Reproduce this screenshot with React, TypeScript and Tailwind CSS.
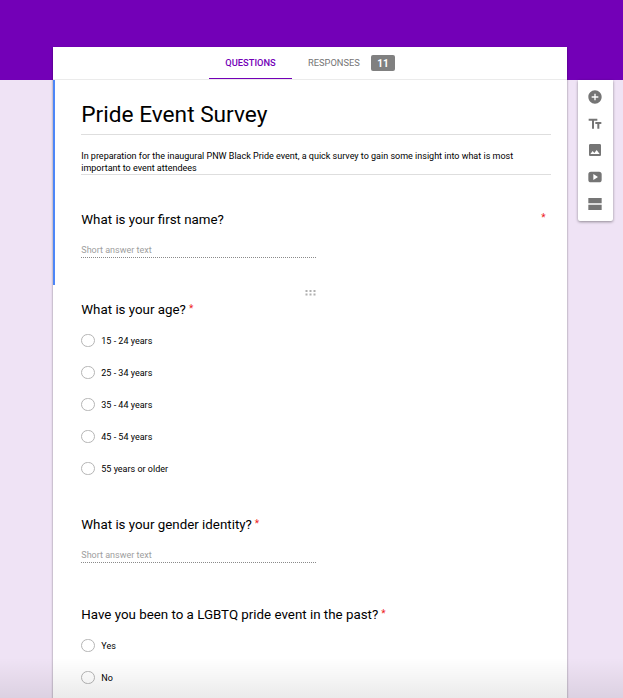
import type { ReactNode } from "react";

function Question({ title, required }: { title: string; required?: boolean }) {
  return (
    <h2 className="flex h-5 items-center whitespace-nowrap pl-[0.3px] pt-[2px] text-[13.33px] leading-5 text-black">
      {title}
      {required && <Star className="ml-[3px]" />}
    </h2>
  );
}

function Star({ className = "" }: { className?: string }) {
  return <span className={`-mt-[3px] text-[10px] leading-4 text-[#ee1c1c] ${className}`}>*</span>;
}

function ShortAnswer() {
  return (
    <div className="mt-[13px] h-[16px] w-[235px] border-b border-dotted border-[#8a8a8a] pl-[0.3px] text-[9px] leading-[16px] text-[#9e9e9e]">
      <span className="block h-4 whitespace-nowrap">Short answer text</span>
    </div>
  );
}

function Option({ label }: { label: string }) {
  return (
    <li className="flex h-8 items-center gap-[6px] text-[9px] text-black">
      <span className="h-[13px] w-[14px] rounded-full border border-[#b5b5b5]" />
      <span className="whitespace-nowrap pl-[0.3px] pt-[3px]">{label}</span>
    </li>
  );
}

function ToolIcon({ children }: { children: ReactNode }) {
  return (
    <button className="flex h-[26.75px] items-center justify-center pr-[1.5px]">
      <svg width="16" height="16" viewBox="0 0 24 24" fill="#757575">
        {children}
      </svg>
    </button>
  );
}

export default function App() {
  return (
    <div className="relative flex h-[698px] w-[623px] items-start overflow-hidden bg-[linear-gradient(#7300b7_80px,#efe3f5_80px)] font-[Roboto,sans-serif]">
      <main className="ml-[53px] mt-[47px] h-[660px] w-[514px] bg-white shadow-[0_1px_2px_rgba(0,0,0,0.45)]">
        <nav className="flex h-[33px] border-b border-[#ebebeb] pl-[156px] text-[9.3px]">
          <div className="flex h-8 w-[83px] items-center justify-center border-b border-[#7300b7] font-medium text-[#7300b7]">
            QUESTIONS
          </div>
          <div className="ml-4 flex h-8 items-center text-[#757575]">
            <span className="-mt-px w-[63px] whitespace-nowrap">RESPONSES</span>
            <span className="flex h-4 w-6 items-center justify-center rounded-[2px] bg-[#808080] text-[10px] font-bold text-white">
              11
            </span>
          </div>
        </nav>

        <section className="h-[205px] border-l-2 border-[#4d86f7] pl-[26px] pr-4">
          <h1 className="h-[55px] whitespace-nowrap border-b border-[#dedede] pl-[0.3px] pt-[19px] text-[22.67px] leading-8 text-black">
            Pride Event Survey
          </h1>
          <p className="h-10 whitespace-nowrap border-b border-[#dedede] pl-[0.2px] pt-[15px] text-[9px] leading-3 text-black">
            In preparation for the inaugural PNW Black Pride event, a quick survey to gain some insight into what is most
            <br />
            important to event attendees
          </p>
          <div className="mt-[34px] flex items-center justify-between pr-[5.5px]">
            <Question title="What is your first name?" />
            <Star className="-mb-px" />
          </div>
          <ShortAnswer />
        </section>

        <div className="flex justify-center pl-px pt-[4px]">
          <svg width="11" height="8" viewBox="0 0 11 8" fill="#b0b0b0">
            <path d="M0.500 1h2v2h-2zM4.500 1h2v2h-2zM8.500 1h2v2h-2zM0.500 4.500h2v2h-2zM4.500 4.500h2v2h-2zM8.500 4.500h2v2h-2z" />
          </svg>
        </div>

        <section className="pl-7 pt-[2px]">
          <Question title="What is your age?" required />
          <ul className="mt-[5px]">
            <Option label="15 - 24 years" />
            <Option label="25 - 34 years" />
            <Option label="35 - 44 years" />
            <Option label="45 - 54 years" />
            <Option label="55 years or older" />
          </ul>
        </section>

        <section className="pl-7 pt-[30px]">
          <Question title="What is your gender identity?" required />
          <ShortAnswer />
        </section>

        <section className="pl-7 pt-[41px]">
          <Question title="Have you been to a LGBTQ pride event in the past?" required />
          <ul className="mt-[5px]">
            <Option label="Yes" />
            <Option label="No" />
          </ul>
        </section>
      </main>

      <aside className="ml-[11px] mt-20 flex h-[141px] w-[35px] flex-col rounded-b-[2px] bg-white pt-[3.5px] shadow-[0_1px_3px_rgba(0,0,0,0.4)]">
        <ToolIcon>
          <path d="M12 2C6.48 2 2 6.48 2 12s4.480 10 10 10 10-4.480 10-10S17.520 2 12 2zm5 11h-4v4h-2v-4H7v-2h4V7h2v4h4v2z" />
        </ToolIcon>
        <ToolIcon>
          <path d="M2.500 4v3h5v12h3V7h5V4h-13zm19 5h-9v3h3v7h3v-7h3V9z" />
        </ToolIcon>
        <ToolIcon>
          <path d="M21 19V5c0-1.100-.9-2-2-2H5c-1.100 0-2 .9-2 2v14c0 1.100.9 2 2 2h14c1.100 0 2-.9 2-2zM8.500 13.500l2.500 3.010L14.500 12l4.500 6H5l3.500-4.500z" />
        </ToolIcon>
        <ToolIcon>
          <path fillRule="evenodd" d="M6 4h12q4 0 4 4v8q0 4-4 4H6q-4 0-4-4V8q0-4 4-4zm3.500 3.500v9l7-4.500z" />
        </ToolIcon>
        <ToolIcon>
          <path d="M2 3h20v8H2zM2 13h20v8H2z" />
        </ToolIcon>
      </aside>

      <div className="pointer-events-none absolute inset-x-0 bottom-0 h-[40px] bg-linear-to-b from-transparent to-black/8" />
    </div>
  );
}
